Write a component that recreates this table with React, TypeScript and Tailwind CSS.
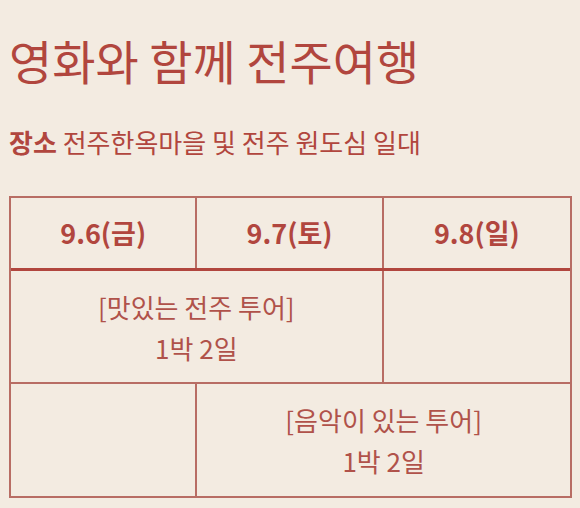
const font = "font-['Noto_Sans_CJK_KR','Noto_Sans',sans-serif]";

type Day = { label: string };

const days: Day[] = [{ label: '9.6(금)' }, { label: '9.7(토)' }, { label: '9.8(일)' }];

const Tour = ({ title, length }: { title: string; length: string }) => (
  <div className="flex flex-col items-center text-[26px] leading-[41px] text-[#b0524a]">
    <span>{title}</span>
    <span>{length}</span>
  </div>
);

export default function App() {
  return (
    <div className={`${font} min-h-[508px] w-full bg-[#f3ebe1] px-[9px] pt-[36px] text-[#b1463e]`}>
      <h1 className="text-[47px] leading-none font-normal">영화와 함께 전주여행</h1>

      <p className="mt-[46px] text-[26px] leading-none">
        <span className="font-bold">장소</span> 전주한옥마을 및 전주 원도심 일대
      </p>

      <div className="mt-[41px] grid w-[563px] grid-cols-3 border-2 border-[#b86d64]">
        {days.map((d, i) => (
          <div
            key={d.label}
            className={`flex h-[70px] items-center justify-center text-[27px] font-bold ${
              i < 2 ? 'border-r-2 border-[#b86d64]' : ''
            }`}
          >
            {d.label}
          </div>
        ))}

        <div className="col-span-3 h-[3px] bg-[#b1463e]" />

        <div className="col-span-2 flex h-[113px] items-center justify-center border-r-2 border-b-2 border-[#b86d64]">
          <Tour title="[맛있는 전주 투어]" length="1박 2일" />
        </div>
        <div className="h-[113px] border-b-2 border-[#b86d64]" />

        <div className="h-[112px] border-r-2 border-[#b86d64]" />
        <div className="col-span-2 flex h-[112px] items-center justify-center">
          <Tour title="[음악이 있는 투어]" length="1박 2일" />
        </div>
      </div>
    </div>
  );
}
